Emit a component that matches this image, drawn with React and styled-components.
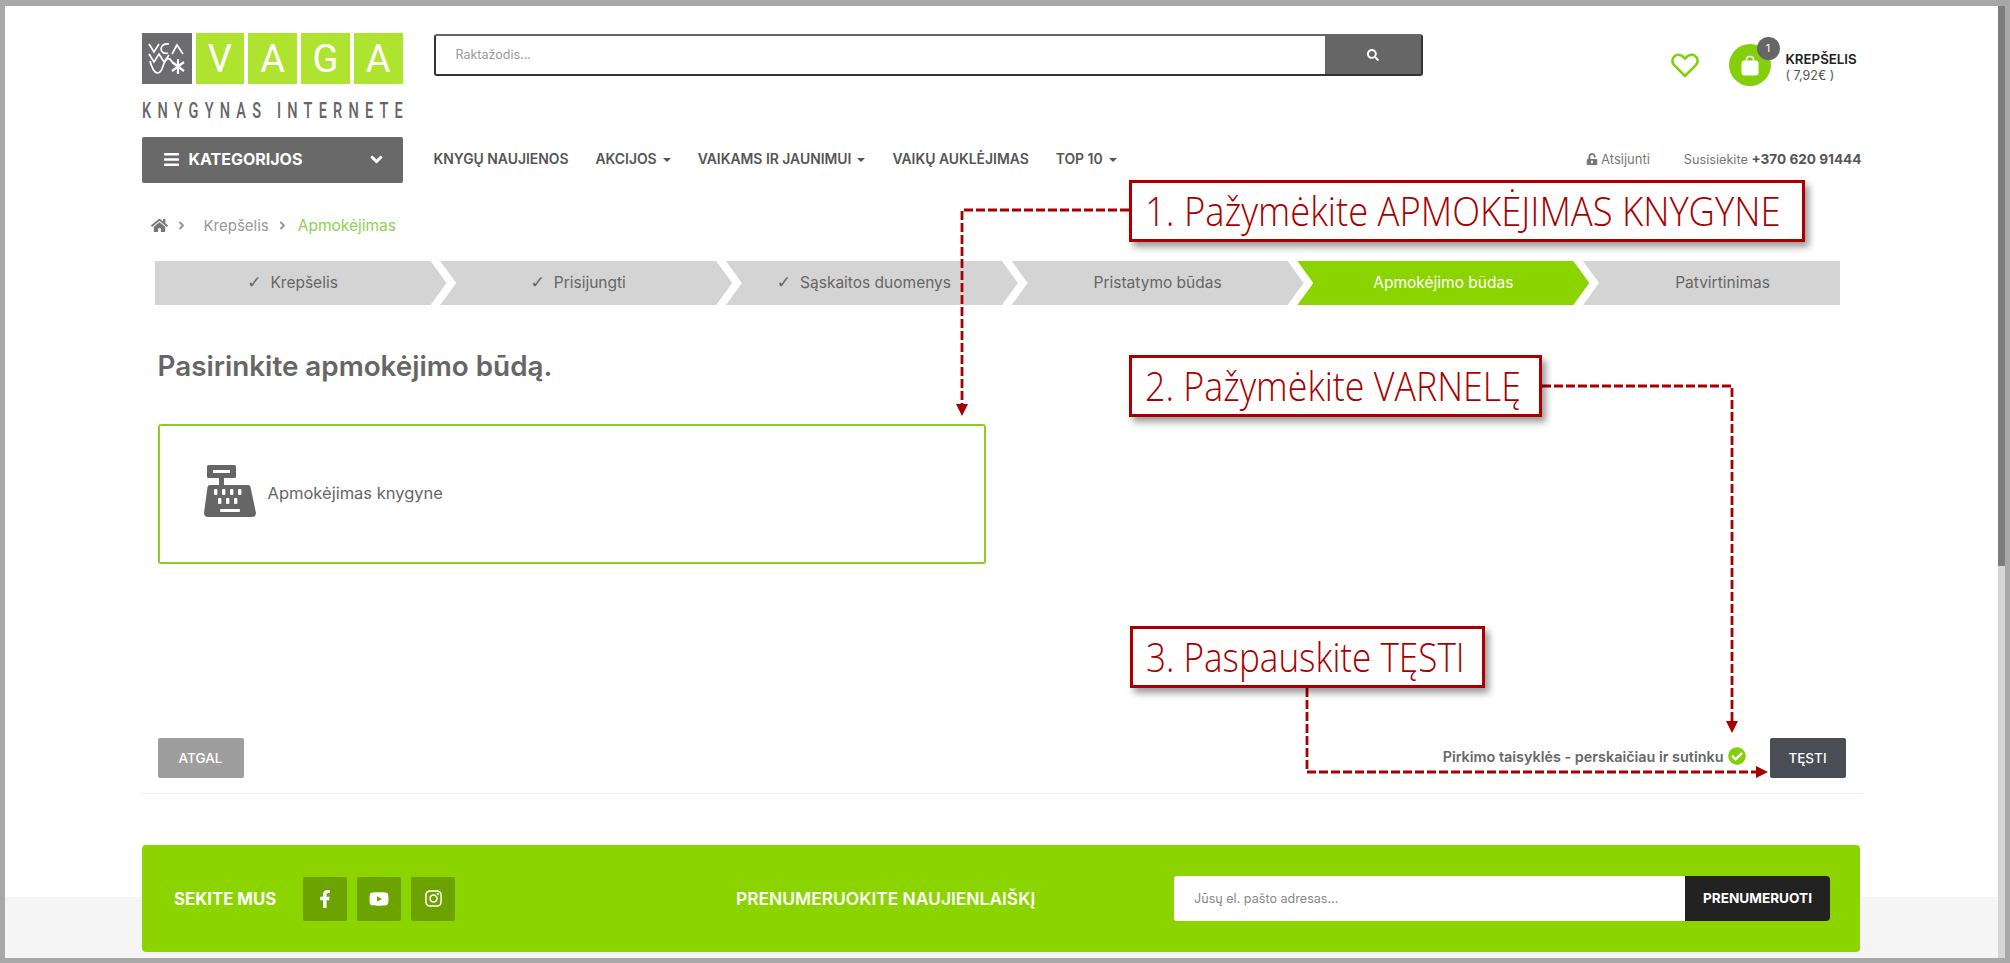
import React from 'react';
import styled, { createGlobalStyle } from 'styled-components';
import {
  FaAngleDown, FaAngleRight, FaBars, FaCheckCircle, FaFacebookF, FaHome,
  FaInstagram, FaSearch, FaUnlockAlt, FaYoutube,
} from 'react-icons/fa';

const Global = createGlobalStyle`
  html, body { margin: 0; padding: 0; background: #fff; overflow: hidden; }
  * { box-sizing: border-box; }
  body { font-family: Inter, "Open Sans", sans-serif; color: #666; }
`;

const RED = '#a80000';
const GREEN = '#8bd400';

const steps = [
  { label: 'Krepšelis', done: true, width: 292, first: true },
  { label: 'Prisijungti', done: true, width: 292 },
  { label: 'Sąskaitos duomenys', done: true, width: 292 },
  { label: 'Pristatymo būdas', width: 292 },
  { label: 'Apmokėjimo būdas', width: 292, active: true },
  { label: 'Patvirtinimas', width: 257, last: true },
];

const App = () => (
  <Frame>
    <Global />
    <Viewport>
      <Container>
        <Header>
          <Logo>
            <LogoTiles>
              <LogoMark>
                <svg width="38" height="36" viewBox="0 0 38 36" fill="none" stroke="#fff" strokeWidth="1.7">
                  <polyline points="1,3 6,11 11,3" />
                  <path d="M21 3 C16 2 13 5 13 8 C13 11 16 13 20 12" />
                  <polyline points="24,13 29,4 35,13" />
                  <polyline points="1,13 6,21 11,13 16,21 21,14" />
                  <path d="M2 20 C6 35 12 35 15 25 C18 17 21 15 24 21" />
                  <path d="M30 18 V33 M24 21 L36 30 M36 21 L24 30" strokeWidth="2.2" />
                </svg>
              </LogoMark>
              {['V', 'A', 'G', 'A'].map((letter, i) => <LogoTile key={i}>{letter}</LogoTile>)}
            </LogoTiles>
            <LogoCaption><span>KNYGYNAS INTERNETE</span></LogoCaption>
          </Logo>
          <Search>
            <SearchText>Raktažodis...</SearchText>
            <SearchButton><FaSearch size={12} /></SearchButton>
          </Search>
          <UserArea>
            <svg width="28" height="25" viewBox="0 0 28 25" fill="none" stroke="#82cf0a" strokeWidth="2.6" strokeLinejoin="round">
              <path d="M14 23 L3.2 12.2 C0.4 9.2 1 5 3.8 3 C6.8 1 10.6 1.6 14 5.6 C17.4 1.6 21.2 1 24.2 3 C27 5 27.6 9.2 24.8 12.2 Z" />
            </svg>
            <Cart>
              <CartCircle>
                <svg width="18" height="21" viewBox="0 0 18 21" fill="#fff">
                  <path d="M5.5 7 V4.5 C5.5 0.5 12.5 0.5 12.5 4.5 V7" fill="none" stroke="#fff" strokeWidth="1.5" />
                  <rect x="0.5" y="5.5" width="17" height="15" rx="3" />
                </svg>
                <CartBadge>1</CartBadge>
              </CartCircle>
              <CartInfo>
                <CartTitle>KREPŠELIS</CartTitle>
                <CartPrice>( 7,92€ )</CartPrice>
              </CartInfo>
            </Cart>
          </UserArea>
        </Header>

        <NavRow>
          <CategoryButton>
            <FaBars size={17} />
            <CategoryLabel>KATEGORIJOS</CategoryLabel>
            <FaAngleDown size={19} />
          </CategoryButton>
          <NavLinks>
            <NavLink>KNYGŲ NAUJIENOS</NavLink>
            <NavLink $caret>AKCIJOS</NavLink>
            <NavLink $caret>VAIKAMS IR JAUNIMUI</NavLink>
            <NavLink>VAIKŲ AUKLĖJIMAS</NavLink>
            <NavLink $caret>TOP 10</NavLink>
          </NavLinks>
          <Contact>
            <Logout><FaUnlockAlt size={12} /> Atsijunti</Logout>
            <Phone>Susisiekite <strong>+370 620 91444</strong></Phone>
          </Contact>
        </NavRow>

        <Breadcrumb>
          <FaHome size={17} />
          <Crumb $gap={7}><FaAngleRight size={13} /></Crumb>
          <Crumb $gap={16}>Krepšelis</Crumb>
          <Crumb $gap={7}><FaAngleRight size={13} /></Crumb>
          <CurrentCrumb>Apmokėjimas</CurrentCrumb>
        </Breadcrumb>

        <Steps>
          {steps.map((step) => (
            <Step key={step.label} $width={step.width} $active={step.active} $first={step.first} $last={step.last} $done={step.done}>
              {step.done && <Tick>✓</Tick>}
              {step.label}
            </Step>
          ))}
        </Steps>

        <Main>
          <Heading>Pasirinkite apmokėjimo būdą.</Heading>
          <PaymentCard>
            <svg width="52" height="52" viewBox="0 0 52 52">
              <rect x="3" y="0" width="29" height="13" rx="1.5" fill="#666" />
              <rect x="9" y="5" width="17" height="3" fill="#fff" />
              <rect x="15" y="13" width="5" height="7" fill="#666" />
              <path d="M6 20 H44 Q46 20 46.5 22 L52 48 Q52 52 48 52 H4 Q0 52 0 48 L3.5 22 Q4 20 6 20 Z" fill="#666" />
              <g fill="#fff">
                <rect x="10" y="24" width="3.4" height="6" rx="1" />
                <rect x="18" y="24" width="3.4" height="6" rx="1" />
                <rect x="26" y="24" width="3.4" height="6" rx="1" />
                <rect x="34" y="24" width="3.4" height="6" rx="1" />
                <rect x="14" y="33" width="3.4" height="6" rx="1" />
                <rect x="22" y="33" width="3.4" height="6" rx="1" />
                <rect x="30" y="33" width="3.4" height="6" rx="1" />
                <rect x="16" y="44" width="20" height="3" rx="1" />
              </g>
            </svg>
            <PaymentLabel>Apmokėjimas knygyne</PaymentLabel>
          </PaymentCard>
          <Actions>
            <BackButton>ATGAL</BackButton>
            <Terms>
              Pirkimo taisyklės - perskaičiau ir sutinku
              <TermsCheck><FaCheckCircle size={18} /></TermsCheck>
            </Terms>
            <NextButton>TĘSTI</NextButton>
          </Actions>
        </Main>
        <Divider />
      </Container>

      <FooterBand>
        <Newsletter>
          <Follow>
            <FollowLabel>SEKITE MUS</FollowLabel>
            <Social><FaFacebookF size={18} /></Social>
            <Social><FaYoutube size={20} /></Social>
            <Social><FaInstagram size={19} /></Social>
          </Follow>
          <NewsTitle>PRENUMERUOKITE NAUJIENLAIŠKĮ</NewsTitle>
          <NewsForm>
            <NewsInput>Jūsų el. pašto adresas...</NewsInput>
            <NewsButton>PRENUMERUOTI</NewsButton>
          </NewsForm>
        </Newsletter>
      </FooterBand>
    </Viewport>
    <Scrollbar><ScrollThumb /></Scrollbar>

    <Arrows width="2010" height="963" viewBox="0 0 2010 963" fill="none">
      <g stroke={RED} strokeWidth="2.8" strokeDasharray="9 3">
        <polyline points="1129,210 962,210 962,404" />
        <polyline points="1542,386 1732,386 1732,722" />
        <polyline points="1307,688 1307,772 1756,772" />
      </g>
      <g fill={RED}>
        <polygon points="956,404 968,404 962,416" />
        <polygon points="1726,721 1738,721 1732,733" />
        <polygon points="1756,766 1756,778 1768,772" />
      </g>
    </Arrows>
    <Callout $left={1129} $top={180} $width={676}><CalloutText $scale={0.91}>1. Pažymėkite APMOKĖJIMAS KNYGYNE</CalloutText></Callout>
    <Callout $left={1129} $top={355} $width={413}><CalloutText $scale={0.895}>2. Pažymėkite VARNELĘ</CalloutText></Callout>
    <Callout $left={1130} $top={626} $width={355}><CalloutText $scale={0.877}>3. Paspauskite TĘSTI</CalloutText></Callout>
  </Frame>
);

export default App;

const Frame = styled.div`
  position: relative;
  display: flex;
  width: 2010px;
  height: 963px;
  padding: 6px 5px 5px 5px;
  background: #a8a8a8;
  overflow: hidden;
`;

const Viewport = styled.div`
  flex: 1;
  min-width: 0;
  display: flex;
  flex-direction: column;
  background: #fff;
`;

const Scrollbar = styled.div`
  width: 7px;
  background: #d6d6d6;
`;

const ScrollThumb = styled.div`
  height: 560px;
  background: #7d7d7d;
`;

const Container = styled.div`
  width: 1720px;
  margin: 0 auto;
`;

const Header = styled.header`
  display: flex;
  align-items: flex-start;
  padding-top: 27px;
`;

const Logo = styled.div`
  width: 261px;
  margin-right: 31px;
  flex: none;
`;

const LogoTiles = styled.div`
  display: flex;
  gap: 4px;
  height: 51px;
`;

const LogoMark = styled.div`
  width: 50px;
  background: #6d6d6f;
  display: flex;
  align-items: center;
  justify-content: center;
`;

const LogoTile = styled.div`
  flex: 1;
  background: #aee32f;
  color: #fff;
  font: 400 38px Roboto, sans-serif;
  display: flex;
  align-items: center;
  justify-content: center;
`;

const LogoCaption = styled.div`
  margin-top: 17px;
  height: 19px;
  white-space: nowrap;
  color: #666;
  font: 500 22px/19px Roboto, sans-serif;
  span {
    display: inline-block;
    letter-spacing: 9.4px;
    transform: scaleX(0.66);
    transform-origin: left center;
  }
`;

const Search = styled.div`
  width: 989px;
  height: 42px;
  margin-top: 1px;
  display: flex;
  border: 2px solid #333;
  border-top-color: #666;
  border-radius: 3px;
`;

const SearchText = styled.div`
  flex: 1;
  padding-left: 20px;
  line-height: 38px;
  font-size: 12.5px;
  color: #999;
`;

const SearchButton = styled.div`
  width: 96px;
  background: #666;
  color: #fff;
  display: flex;
  align-items: center;
  justify-content: center;
`;

const UserArea = styled.div`
  margin-left: auto;
  display: flex;
  align-items: center;
  gap: 30px;
  margin-top: 11px;
`;

const Cart = styled.div`
  display: flex;
  align-items: center;
  gap: 15px;
`;

const CartCircle = styled.div`
  position: relative;
  width: 42px;
  height: 42px;
  border-radius: 50%;
  background: #82cf0a;
  display: flex;
  align-items: center;
  justify-content: center;
`;

const CartBadge = styled.span`
  position: absolute;
  top: -7px;
  right: -9px;
  width: 23px;
  height: 23px;
  border-radius: 50%;
  background: #666;
  color: #fff;
  font-size: 11px;
  line-height: 23px;
  text-align: center;
`;

const CartInfo = styled.div`
  width: 76px;
  padding-top: 4px;
`;

const CartTitle = styled.div`
  color: #222;
  font-size: 13.3px;
  font-weight: 600;
  line-height: 17px;
`;

const CartPrice = styled.div`
  color: #555;
  font-size: 12.5px;
  line-height: 16px;
`;

const NavRow = styled.nav`
  display: flex;
  align-items: center;
  margin-top: 17px;
  height: 46px;
`;

const CategoryButton = styled.div`
  width: 261px;
  height: 46px;
  flex: none;
  margin-right: 31px;
  padding: 0 17px 2px 21px;
  display: flex;
  align-items: center;
  background: #696969;
  border-radius: 2px;
  color: #fff;
`;

const CategoryLabel = styled.span`
  flex: 1;
  margin-left: 9px;
  font-size: 16px;
  font-weight: 700;
`;

const NavLinks = styled.div`
  display: flex;
  gap: 27px;
  padding-bottom: 2px;
`;

const NavLink = styled.span`
  color: #555;
  font-size: 13.9px;
  font-weight: 600;
  white-space: nowrap;
  &::after {
    content: '';
    display: ${(p) => (p.$caret ? 'inline-block' : 'none')};
    margin-left: 6px;
    vertical-align: 2px;
    border: 4px solid transparent;
    border-top-color: #555;
    border-bottom-width: 0;
  }
`;

const Contact = styled.div`
  margin-left: auto;
  display: flex;
  align-items: center;
  gap: 34px;
  padding-bottom: 2px;
  font-size: 13px;
  color: #777;
`;

const Logout = styled.span`
  display: flex;
  align-items: center;
  gap: 3px;
`;

const Phone = styled.span`
  font-size: 12.7px;
  strong {
    color: #555;
    font-size: 13.6px;
    font-weight: 700;
  }
`;

const Breadcrumb = styled.div`
  margin-top: 31px;
  height: 22px;
  padding-left: 9px;
  display: flex;
  align-items: center;
  color: #777;
  font-size: 15px;
`;

const Crumb = styled.span`
  display: flex;
  margin-left: ${(p) => p.$gap}px;
  color: #999;
`;

const CurrentCrumb = styled.span`
  margin-left: 9px;
  color: #8fd14f;
  font-size: 15.5px;
`;

const Steps = styled.div`
  margin: 25px 0 0 13px;
  display: flex;
`;

const Step = styled.div`
  flex: none;
  width: ${(p) => p.$width}px;
  height: 44px;
  margin-right: -6.3px;
  padding-right: ${(p) => (p.$done ? 16 : 0)}px;
  padding-left: ${(p) => (p.$last ? 22 : 0)}px;
  padding-bottom: 2px;
  display: flex;
  align-items: center;
  justify-content: center;
  background: ${(p) => (p.$active ? GREEN : '#d4d4d4')};
  color: ${(p) => (p.$active ? '#fff' : '#666')};
  font-size: 15.5px;
  clip-path: ${(p) => (p.$last
    ? 'polygon(0 0, 100% 0, 100% 100%, 0 100%, 16px 50%)'
    : p.$first
      ? 'polygon(0 0, calc(100% - 16px) 0, 100% 50%, calc(100% - 16px) 100%, 0 100%)'
      : 'polygon(0 0, calc(100% - 16px) 0, 100% 50%, calc(100% - 16px) 100%, 0 100%, 16px 50%)')};
`;

const Tick = styled.span`
  margin-right: 9px;
  font-family: "DejaVu Sans", sans-serif;
  font-size: 17px;
`;

const Main = styled.main`
  padding: 0 16px;
`;

const Heading = styled.h1`
  margin: 45px 0 0;
  color: #666;
  font-size: 27.8px;
  font-weight: 600;
  line-height: 32px;
`;

const PaymentCard = styled.div`
  width: 828px;
  height: 140px;
  margin-top: 42px;
  padding: 39px 0 0 44px;
  display: flex;
  align-items: flex-start;
  border: 2px solid #8fcb27;
  border-radius: 3px;
`;

const PaymentLabel = styled.span`
  margin: 18px 0 0 12px;
  font-size: 16.5px;
  color: #666;
`;

const Actions = styled.div`
  margin-top: 174px;
  height: 40px;
  display: flex;
  align-items: center;
`;

const BackButton = styled.div`
  width: 86px;
  height: 40px;
  background: #9e9e9e;
  border-radius: 2px;
  color: #fff;
  font-size: 13.5px;
  font-weight: 500;
  line-height: 40px;
  text-align: center;
`;

const Terms = styled.div`
  margin-left: auto;
  display: flex;
  align-items: center;
  padding-bottom: 3px;
  color: #666;
  font-size: 14.4px;
  font-weight: 600;
`;

const TermsCheck = styled.span`
  display: flex;
  margin: -2px 0 0 4px;
  color: #82cf0a;
`;

const NextButton = styled.div`
  width: 76px;
  height: 40px;
  margin-left: 24px;
  background: #484e54;
  border-radius: 2px;
  color: #fff;
  font-size: 13.5px;
  font-weight: 500;
  line-height: 40px;
  text-align: center;
`;

const Divider = styled.div`
  height: 1px;
  margin-top: 15px;
  background: #eee;
`;

const FooterBand = styled.div`
  flex: 1;
  margin-top: 51px;
  background: linear-gradient(#fff 52px, #f5f5f5 52px);
`;

const Newsletter = styled.section`
  width: 1718px;
  height: 107px;
  margin-left: 137px;
  padding-left: 32px;
  display: grid;
  grid-template-columns: 562px 438px 656px;
  align-items: center;
  background: ${GREEN};
  border-radius: 4px;
  color: #fff;
`;

const Follow = styled.div`
  display: flex;
  align-items: center;
  gap: 10px;
`;

const FollowLabel = styled.span`
  width: 119px;
  font-size: 16.8px;
  font-weight: 700;
`;

const Social = styled.span`
  width: 44px;
  height: 44px;
  display: flex;
  align-items: center;
  justify-content: center;
  background: #6ca300;
  border-radius: 2px;
`;

const NewsTitle = styled.div`
  font-size: 17.4px;
  font-weight: 600;
`;

const NewsForm = styled.div`
  height: 45px;
  display: flex;
`;

const NewsInput = styled.div`
  flex: 1;
  padding-left: 20px;
  background: #fff;
  border-radius: 3px 0 0 3px;
  color: #888;
  font-size: 12.6px;
  line-height: 45px;
`;

const NewsButton = styled.div`
  width: 145px;
  background: #222;
  border-radius: 0 4px 4px 0;
  color: #fff;
  font-size: 13.6px;
  font-weight: 700;
  line-height: 45px;
  text-align: center;
`;

const Arrows = styled.svg`
  position: absolute;
  top: 0;
  left: 0;
  pointer-events: none;
`;

const Callout = styled.div`
  position: absolute;
  left: ${(p) => p.$left}px;
  top: ${(p) => p.$top}px;
  width: ${(p) => p.$width}px;
  height: 62px;
  padding: 0 0 2px 13px;
  display: flex;
  align-items: center;
  background: #fff;
  border: 3px solid ${RED};
  box-shadow: 4px 5px 7px rgba(0, 0, 0, 0.4);
  overflow: hidden;
  white-space: nowrap;
`;

const CalloutText = styled.span`
  display: inline-block;
  color: ${RED};
  font: 300 40px "Open Sans", sans-serif;
  transform: scaleX(${(p) => p.$scale});
  transform-origin: left center;
`;
